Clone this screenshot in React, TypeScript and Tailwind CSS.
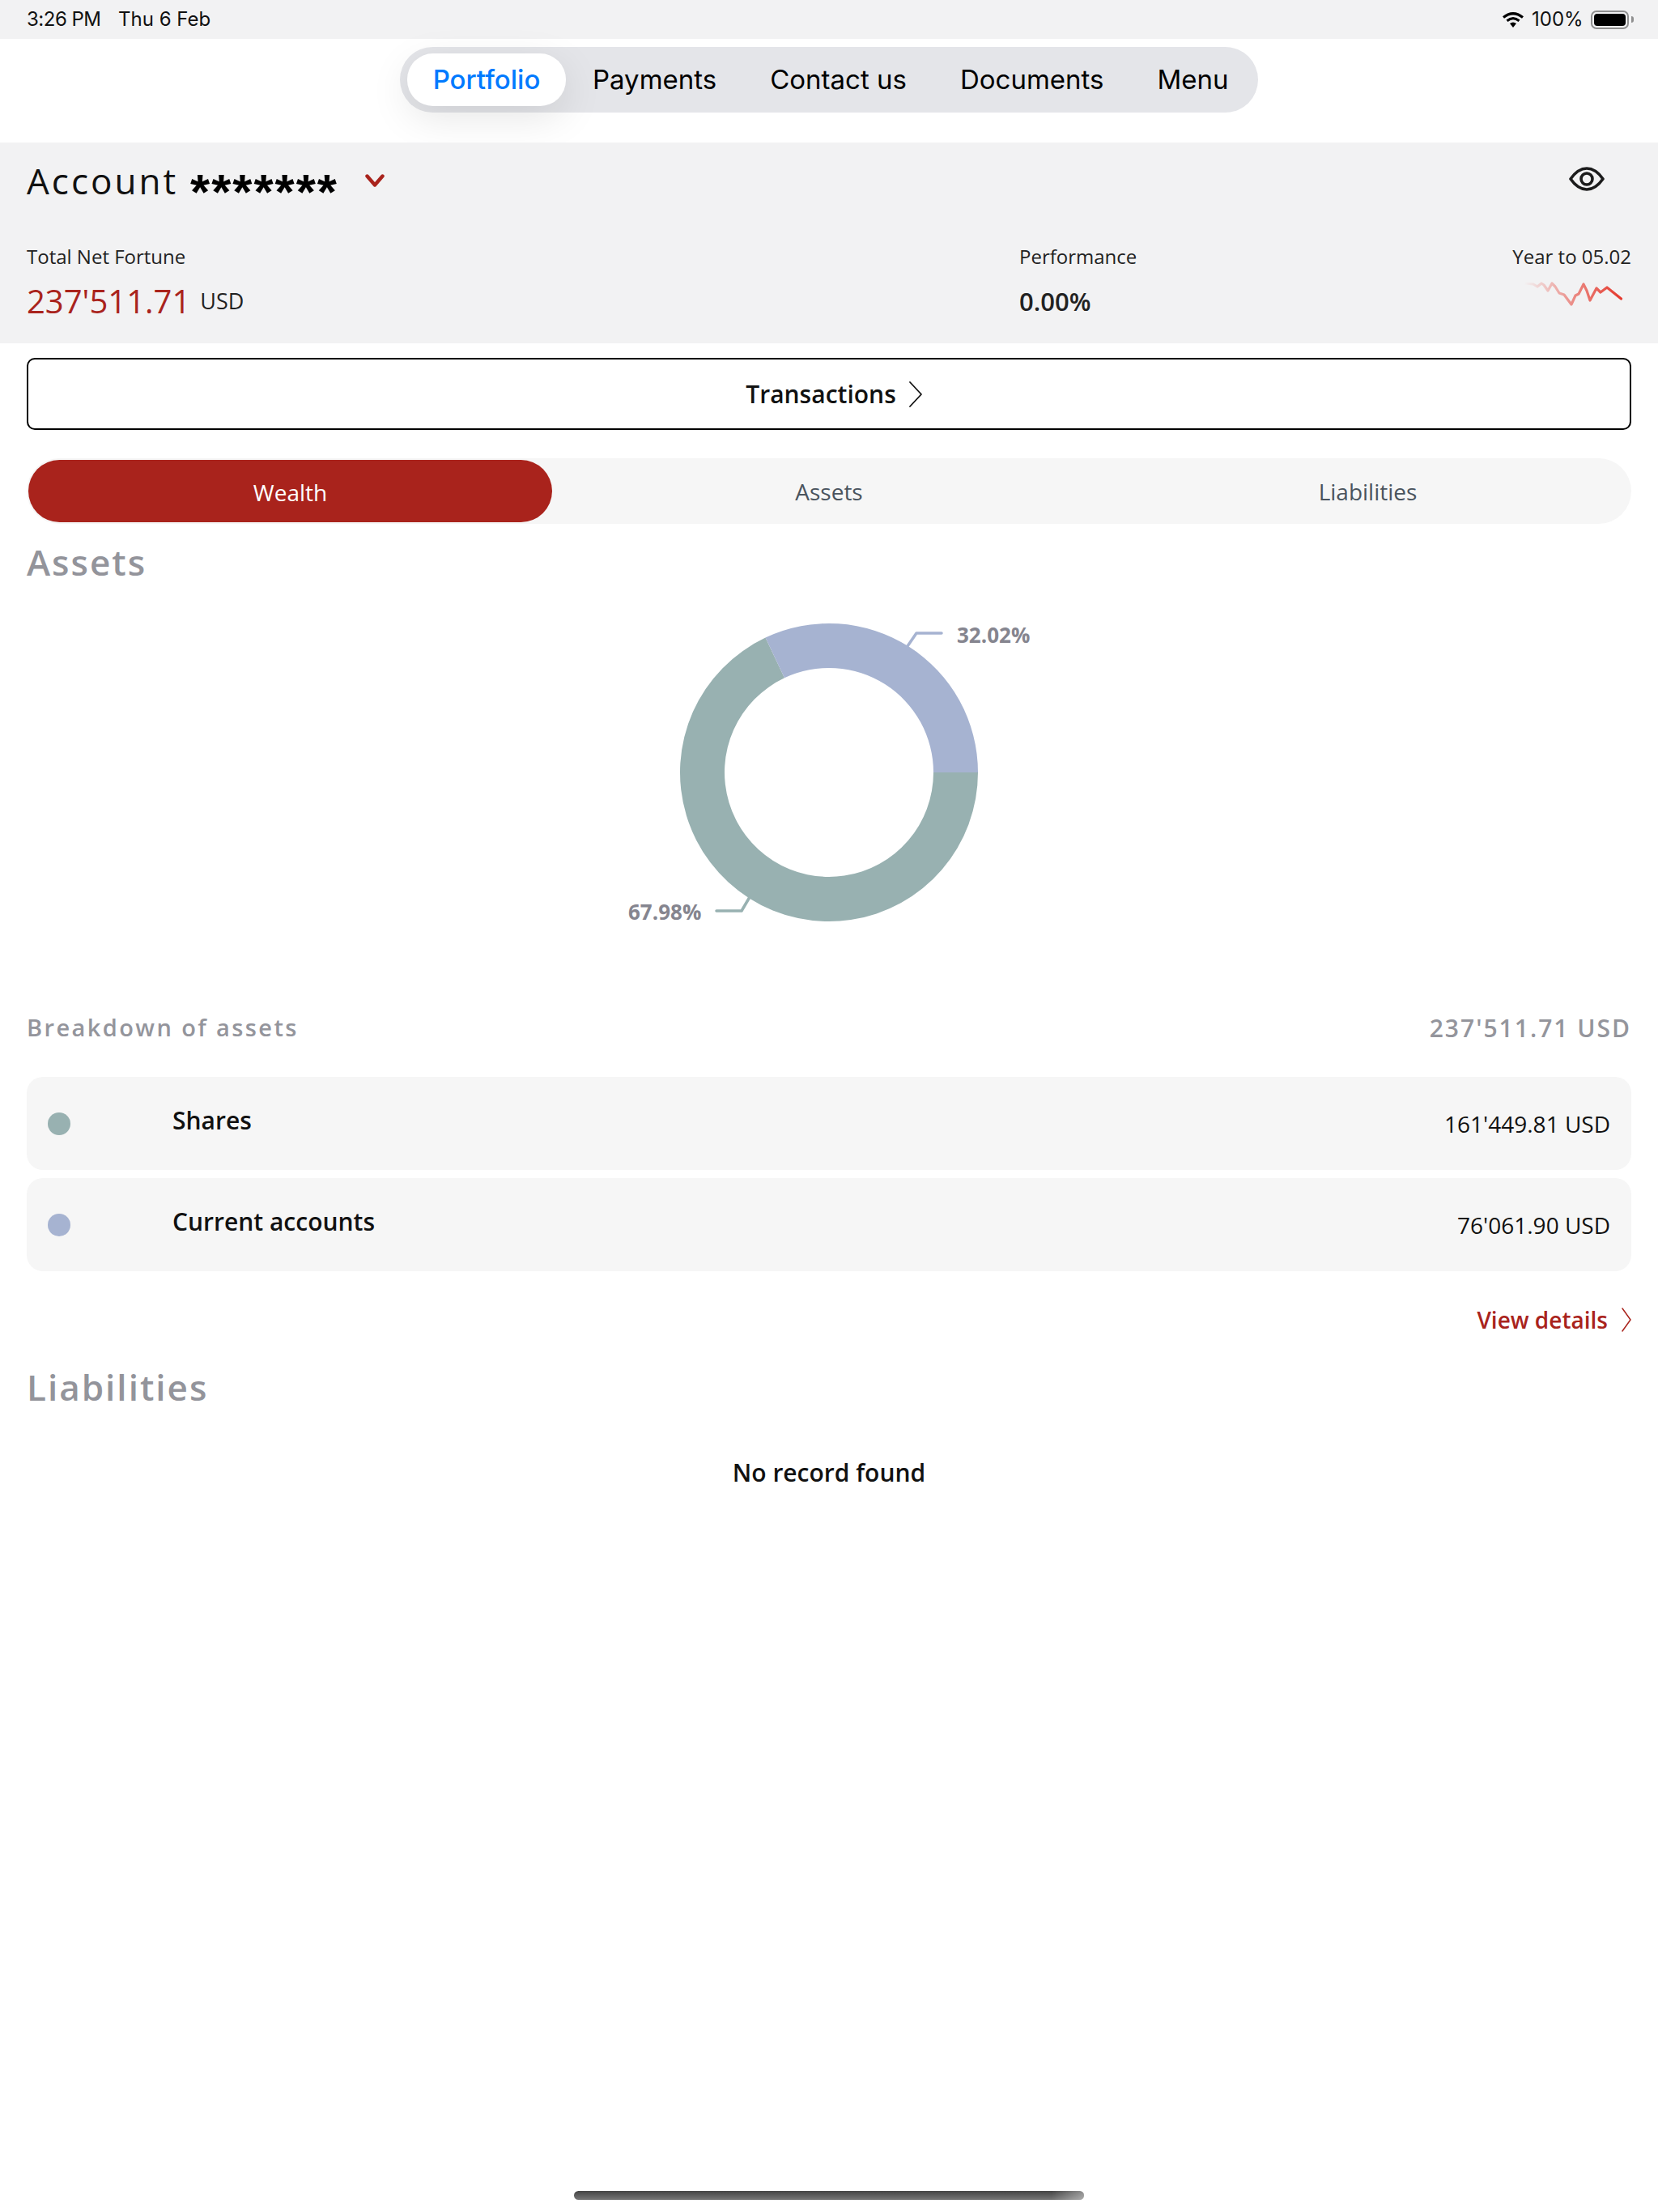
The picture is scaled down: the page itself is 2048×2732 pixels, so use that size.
const open = "font-['Open_Sans',sans-serif]";

const Chevron = ({ className }: { className: string }) => (
  <svg viewBox="0 0 18 34" className={className} fill="none" stroke="currentColor" strokeLinecap="round" strokeLinejoin="round">
    <path d="M2 2 L16 17 L2 32" />
  </svg>
);

const StatusBar = () => (
  <div className="h-[48px] bg-[#f2f2f3] flex items-center justify-between pl-[33px] pr-[30px] font-['Inter',sans-serif] text-[24px] text-[#111]">
    <div className="flex items-center">
      <span className="w-[113px] tracking-[-0.5px]">3:26 PM</span>
      <span>Thu 6 Feb</span>
    </div>
    <div className="flex items-center">
      <svg viewBox="0 0 28 20" className="w-[28px] h-[20px]">
        <path d="M2 7.5 Q14 -2 26 7.5" fill="none" stroke="#000" strokeWidth="3.2" />
        <path d="M6.5 11.8 Q14 5.6 21.5 11.8" fill="none" stroke="#000" strokeWidth="3.2" />
        <path d="M10 15 Q14 12 18 15 L14 20 Z" fill="#000" />
      </svg>
      <span className="ml-[9px] w-[73px]">100%</span>
      <div className="w-[47px] h-[23px] rounded-[7px] border-2 border-[#8f8f8f] p-[2px]">
        <div className="w-full h-full rounded-[4px] bg-black"></div>
      </div>
      <div className="ml-[3px] w-[3px] h-[8px] rounded-r-full bg-[#8f8f8f]"></div>
    </div>
  </div>
);

const NavBar = () => (
  <div className="h-[128px] pt-[10px] bg-white">
    <div className="w-[1060px] h-[81px] mx-auto rounded-full bg-[#e4e5e9] flex items-center justify-between pl-[9px] pr-[14px] font-['Inter',sans-serif] text-[33px] text-black whitespace-nowrap">
      <div className="w-[196px] h-[65px] shrink-0 rounded-[32px] bg-white text-[#007aff] font-medium flex items-center justify-center shadow-[0_14px_50px_rgba(0,0,0,0.1)]">Portfolio</div>
      <div className="px-[33px]">Payments</div>
      <div className="px-[33px]">Contact us</div>
      <div className="px-[33px]">Documents</div>
      <div className="px-[33px]">Menu</div>
    </div>
  </div>
);

const Sparkline = () => (
  <svg viewBox="0 0 130 36" className="w-[130px] h-[36px] mt-[13px] mr-[5px]" fill="none">
    <defs>
      <linearGradient id="spark" x1="0" y1="0" x2="1" y2="0">
        <stop offset="0" stopColor="#e5392d" stopOpacity="0" />
        <stop offset="0.5" stopColor="#e5392d" stopOpacity="0.55" />
        <stop offset="1" stopColor="#e5392d" />
      </linearGradient>
    </defs>
    <path
      d="M3 3 L14 4 L19 7 L24 3 L27 5 L32 12 L37 3 L41 7 L46 15 L52 17 L61 29 L66 18 L70 16 L76 4 L80 12 L84 24 L92 9 L97 14 L105 8 L122.5 22"
      stroke="url(#spark)"
      strokeWidth="3.2"
      strokeLinejoin="round"
      strokeLinecap="round"
    />
  </svg>
);

const AccountPanel = () => (
  <div className={`h-[248px] bg-[#f2f2f3] px-[33px] ${open}`}>
    <div className="h-[92px] pt-[17px] flex items-start justify-between">
      <div className="flex items-start">
        <span className="text-[44px] leading-[60px] tracking-[3px] text-[#111] w-[202px]">Account</span>
        <span className="text-[62px] leading-[60px] tracking-[2px] font-bold text-black w-[216px] font-['Liberation_Sans',sans-serif] mt-[14px] h-[44px]">*******</span>
        <svg viewBox="0 0 24 16" className="w-[24px] h-[16px] mt-[22px]" fill="none" stroke="#a9231c" strokeWidth="4.4" strokeLinecap="round" strokeLinejoin="round">
          <path d="M2.5 2.5 L12 13.5 L21.5 2.5" />
        </svg>
      </div>
      <svg viewBox="0 0 44 30" className="w-[44px] h-[30px] mt-[13px] mr-[33px]" fill="none" stroke="#1c1c1c" strokeWidth="3.6">
        <path d="M2 15 C9 5 15 2 22 2 C29 2 35 5 42 15 C35 25 29 28 22 28 C15 28 9 25 2 15 Z" strokeLinejoin="round" />
        <circle cx="22" cy="15" r="7" />
      </svg>
    </div>
    <div className="pt-[32px] flex items-start">
      <div className="w-[1226px]">
        <div className="text-[24px] leading-[34px] text-[#222]">Total Net Fortune</div>
        <div className="mt-[13px] flex items-center">
          <span className="text-[40px] leading-[50px] text-[#a9231c]">237'511.71</span>
          <span className="ml-[12px] text-[27px] text-[#222]">USD</span>
        </div>
      </div>
      <div>
        <div className="text-[24px] leading-[34px] text-[#222]">Performance</div>
        <div className="mt-[13px] text-[31px] leading-[50px] font-semibold text-[#222]">0.00%</div>
      </div>
      <div className="ml-auto flex flex-col items-end">
        <div className="text-[24px] leading-[34px] text-[#222]">Year to 05.02</div>
        <Sparkline />
      </div>
    </div>
  </div>
);

const TabPills = () => (
  <div className="mt-[35px] h-[81px] rounded-full bg-[#f6f6f6] flex items-center justify-between px-[2px] text-[28px]">
    <div className="w-[647px] h-[77px] pt-[2px] rounded-full bg-[#a9231c] text-white flex items-center justify-center">Wealth</div>
    <div className="w-[647px] text-center text-[#4a545e]">Assets</div>
    <div className="w-[647px] text-center text-[#4a545e]">Liabilities</div>
  </div>
);

const Donut = () => (
  <div className="mt-[36px] flex justify-center">
    <svg viewBox="0 0 520 390" className="w-[520px] h-[390px]">
      <path d="M444 194 A184 184 0 1 1 181.5 27.6 L205 77.3 A129 129 0 1 0 389 194 Z" fill="#98b1b1" />
      <path d="M444 194 A184 184 0 0 0 181.5 27.6 L205 77.3 A129 129 0 0 1 389 194 Z" fill="#a6b3d1" />
      <path d="M357 38 L368 22 L399 22" fill="none" stroke="#a6b3d1" strokeWidth="3.5" strokeLinecap="round" strokeLinejoin="round" />
      <path d="M162 348 L152 365 L121 365" fill="none" stroke="#98b1b1" strokeWidth="3.5" strokeLinecap="round" strokeLinejoin="round" />
      <text x="418" y="34" fontSize="26" fontWeight="700" fill="#85858f">32.02%</text>
      <text x="12" y="376" fontSize="26" fontWeight="700" fill="#85858f">67.98%</text>
    </svg>
  </div>
);

const HoldingRow = ({ color, label, value }: { color: string; label: string; value: string }) => (
  <div className="h-[115px] rounded-[20px] bg-[#f6f6f6] flex items-center pl-[26px] pr-[26px]">
    <div className={`w-[28px] h-[28px] rounded-full ${color}`}></div>
    <div className="ml-[126px] -mt-[8px] text-[30px] font-semibold text-[#111]">{label}</div>
    <div className="ml-auto text-[28px] text-[#111]">{value}</div>
  </div>
);

export default function App() {
  return (
    <div className={`min-h-[2732px] bg-white flex flex-col ${open}`}>
      <StatusBar />
      <NavBar />
      <AccountPanel />
      <div className="h-[18px]"></div>
      <div className="px-[33px]">
        <button className="w-full h-[89px] pl-[13px] rounded-[10px] border-2 border-black flex items-center justify-center text-[30px] font-semibold text-[#111]">
          <span>Transactions</span>
          <Chevron className="w-[18px] h-[34px] ml-[15px] stroke-[1.8]" />
        </button>
        <TabPills />
        <h2 className="mt-[17px] h-[60px] text-[44px] leading-[60px] font-semibold tracking-[2px] text-[#93949b]">Assets</h2>
        <Donut />
        <div className="mt-[99px] h-[40px] flex items-center justify-between text-[#94959c]">
          <span className="text-[29px] font-semibold tracking-[2.4px]">Breakdown of assets</span>
          <span className="text-[30px] font-semibold tracking-[2px]">237'511.71 USD</span>
        </div>
        <div className="mt-[41px] flex flex-col gap-[10px]">
          <HoldingRow color="bg-[#98b1b1]" label="Shares" value="161'449.81 USD" />
          <HoldingRow color="bg-[#a6b3d1]" label="Current accounts" value="76'061.90 USD" />
        </div>
        <div className="mt-[40px] h-[40px] flex items-center justify-end text-[28px] font-semibold text-[#a9231c]">
          <span>View details</span>
          <svg viewBox="0 0 12 30" className="w-[12px] h-[30px] ml-[17px]" fill="none" stroke="currentColor" strokeWidth="1.5" strokeLinecap="round" strokeLinejoin="round">
            <path d="M1 1 L11 15 L1 29" />
          </svg>
        </div>
        <h2 className="mt-[33px] h-[60px] text-[44px] leading-[60px] font-semibold tracking-[2px] text-[#93949b]">Liabilities</h2>
        <div className="mt-[55px] h-[40px] flex items-center justify-center text-[30px] font-semibold text-[#111]">No record found</div>
      </div>
      <div className="mt-auto mb-[15px] mx-auto w-[630px] h-[11px] rounded-full overflow-hidden bg-gradient-to-b from-[#444444] to-[#777777] flex justify-end">
        <div className="w-[40px] h-full bg-gradient-to-r from-transparent to-white/40"></div>
      </div>
    </div>
  );
}
